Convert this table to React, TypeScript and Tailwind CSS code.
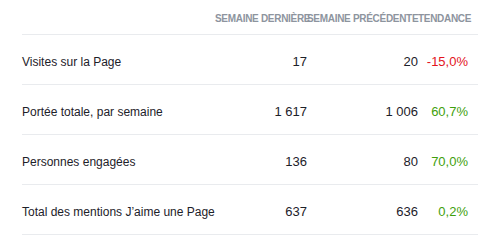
const rows = [
  { label: 'Visites sur la Page', last: '17', prev: '20', trend: '-15,0%', up: false },
  { label: 'Portée totale, par semaine', last: '1 617', prev: '1 006', trend: '60,7%', up: true },
  { label: 'Personnes engagées', last: '136', prev: '80', trend: '70,0%', up: true },
  { label: 'Total des mentions J’aime une Page', last: '637', prev: '636', trend: '0,2%', up: true },
];

export default function App() {
  return (
    <div className="w-[500px] h-[244px] bg-white px-[22px] font-['Liberation_Sans',Arial,sans-serif]">
      <div className="grid grid-cols-[193px_92px_111px_50px] h-[35px] border-b border-[#e9ebee] pt-[3px] items-center text-[10px] tracking-[-0.3px] font-bold uppercase text-[#8d949e] whitespace-nowrap">
        <div></div>
        <div>Semaine dernière</div>
        <div>Semaine précédente</div>
        <div>Tendance</div>
      </div>
      {rows.map(r => (
        <div
          key={r.label}
          className="grid grid-cols-[193px_92px_111px_50px] h-[50px] border-b border-[#e9ebee] pt-[5px] items-center text-[13px] text-[#1d2129] whitespace-nowrap"
        >
          <div className="text-[12px]">{r.label}</div>
          <div className="text-right">{r.last}</div>
          <div className="text-right">{r.prev}</div>
          <div className={`text-right ${r.up ? 'text-[#3f9f0c]' : 'text-[#e3141c]'}`}>{r.trend}</div>
        </div>
      ))}
    </div>
  );
}
